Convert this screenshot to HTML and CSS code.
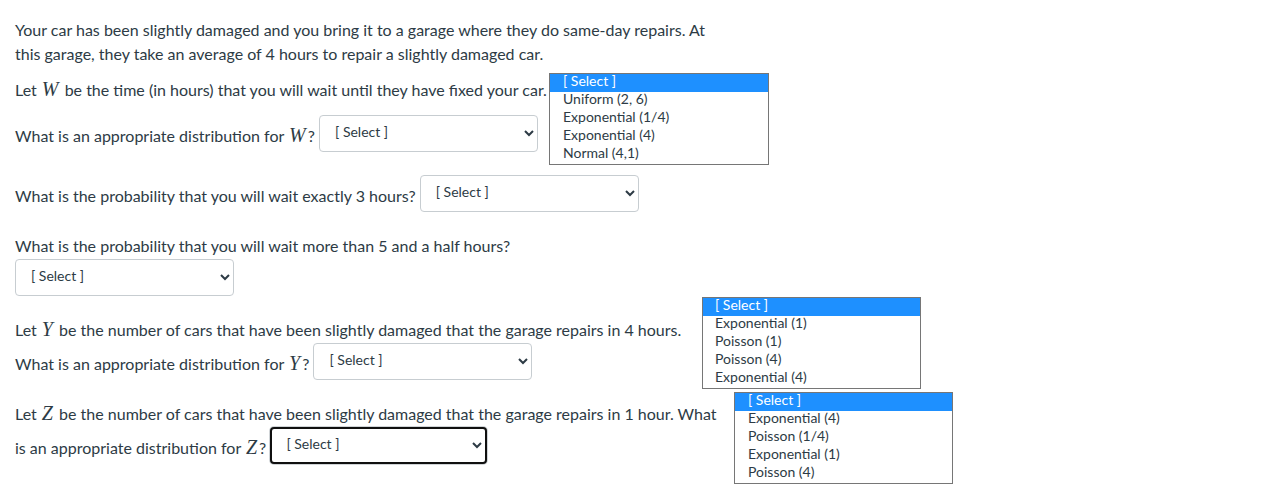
FILE: index.html
```html
<!DOCTYPE html>
<html lang="en">
<head>
<meta charset="utf-8">
<title>Quiz question</title>
<link rel="stylesheet" href="styles.css">
</head>
<body>
<div class="page">
  <p>Your car has been slightly damaged and you bring it to a garage where they do same-day repairs. At this garage, they take an average of 4 hours to repair a slightly damaged car.</p>
  <p>Let <var class="m">W</var> be the time (in hours) that you will wait until they have fixed your car.</p>
  <p class="q">What is an appropriate distribution for <var class="m">W</var>? <select class="sel"><option>[ Select ]</option><option>Uniform (2, 6)</option><option>Exponential (1/4)</option><option>Exponential (4)</option><option>Normal (4,1)</option></select></p>
  <p class="q">What is the probability that you will wait exactly 3 hours? <select class="sel"><option>[ Select ]</option></select></p>
  <p class="q">What is the probability that you will wait more than 5 and a half hours? <select class="sel"><option>[ Select ]</option></select></p>
  <p class="q">Let <var class="m">Y</var> be the number of cars that have been slightly damaged that the garage repairs in 4 hours. What is an appropriate distribution for <var class="m">Y</var>? <select class="sel"><option>[ Select ]</option><option>Exponential (1)</option><option>Poisson (1)</option><option>Poisson (4)</option><option>Exponential (4)</option></select></p>
  <p class="q">Let <var class="m">Z</var> be the number of cars that have been slightly damaged that the garage repairs in 1 hour. What is an appropriate distribution for <var class="m">Z</var>? <select class="sel focused"><option>[ Select ]</option><option>Exponential (4)</option><option>Poisson (1/4)</option><option>Exponential (1)</option><option>Poisson (4)</option></select></p>
</div>

<ul class="popup popup-w">
  <li class="active">[ Select ]</li>
  <li>Uniform (2, 6)</li>
  <li>Exponential (1/4)</li>
  <li>Exponential (4)</li>
  <li>Normal (4,1)</li>
</ul>
<ul class="popup popup-y">
  <li class="active">[ Select ]</li>
  <li>Exponential (1)</li>
  <li>Poisson (1)</li>
  <li>Poisson (4)</li>
  <li>Exponential (4)</li>
</ul>
<ul class="popup popup-z">
  <li class="active">[ Select ]</li>
  <li>Exponential (4)</li>
  <li>Poisson (1/4)</li>
  <li>Exponential (1)</li>
  <li>Poisson (4)</li>
</ul>
</body>
</html>
```

FILE: styles.css
```css
html, body {
  margin: 0;
  padding: 0;
  background: #ffffff;
}

body {
  position: relative;
  font-family: Lato, "Open Sans", "Liberation Sans", sans-serif;
  font-size: 16px;
  line-height: 24px;
  color: #2d3b45;
}

.page {
  width: 706px;
  padding: 6px 15px;
}

.page p {
  margin: 12px 0;
}

.m {
  font-family: "Liberation Serif", "DejaVu Serif", serif;
  font-style: italic;
  font-size: 20px;
  line-height: 10px;
  padding: 0 2px 0 1px;
}

.sel {
  width: 219px;
  height: 37px;
  margin: 1px 0 10px 0;
  padding: 0 8px 4px 11px;
  vertical-align: middle;
  font-family: Lato, "Open Sans", "Liberation Sans", sans-serif;
  font-size: 14px;
  color: #2d3b45;
  background-color: #ffffff;
  border: 1px solid #c7cdd1;
  border-radius: 4px;
  box-sizing: border-box;
}

.sel.focused {
  width: 217px;
  border: 2px solid #101010;
  box-shadow: 0 0 0 1px #d0d4d7;
  padding-left: 10px;
}

.popup {
  position: absolute;
  margin: 0;
  padding: 0;
  list-style: none;
  width: 220px;
  box-sizing: border-box;
  border: 1px solid #767676;
  background: #ffffff;
  font-family: Lato, "Open Sans", "Liberation Sans", sans-serif;
  font-size: 14px;
  line-height: 14px;
  color: #2d3b45;
}

.popup li {
  height: 18px;
  padding-left: 13px;
  white-space: nowrap;
}

.popup li.active {
  background: #1e90ff;
  color: #ffffff;
}

.popup-w {
  left: 549px;
  top: 73px;
}

.popup-y {
  left: 702px;
  top: 297px;
  width: 219px;
}

.popup-y li {
  padding-left: 12px;
}

.popup-z {
  left: 734px;
  top: 392px;
  width: 219px;
}
```
